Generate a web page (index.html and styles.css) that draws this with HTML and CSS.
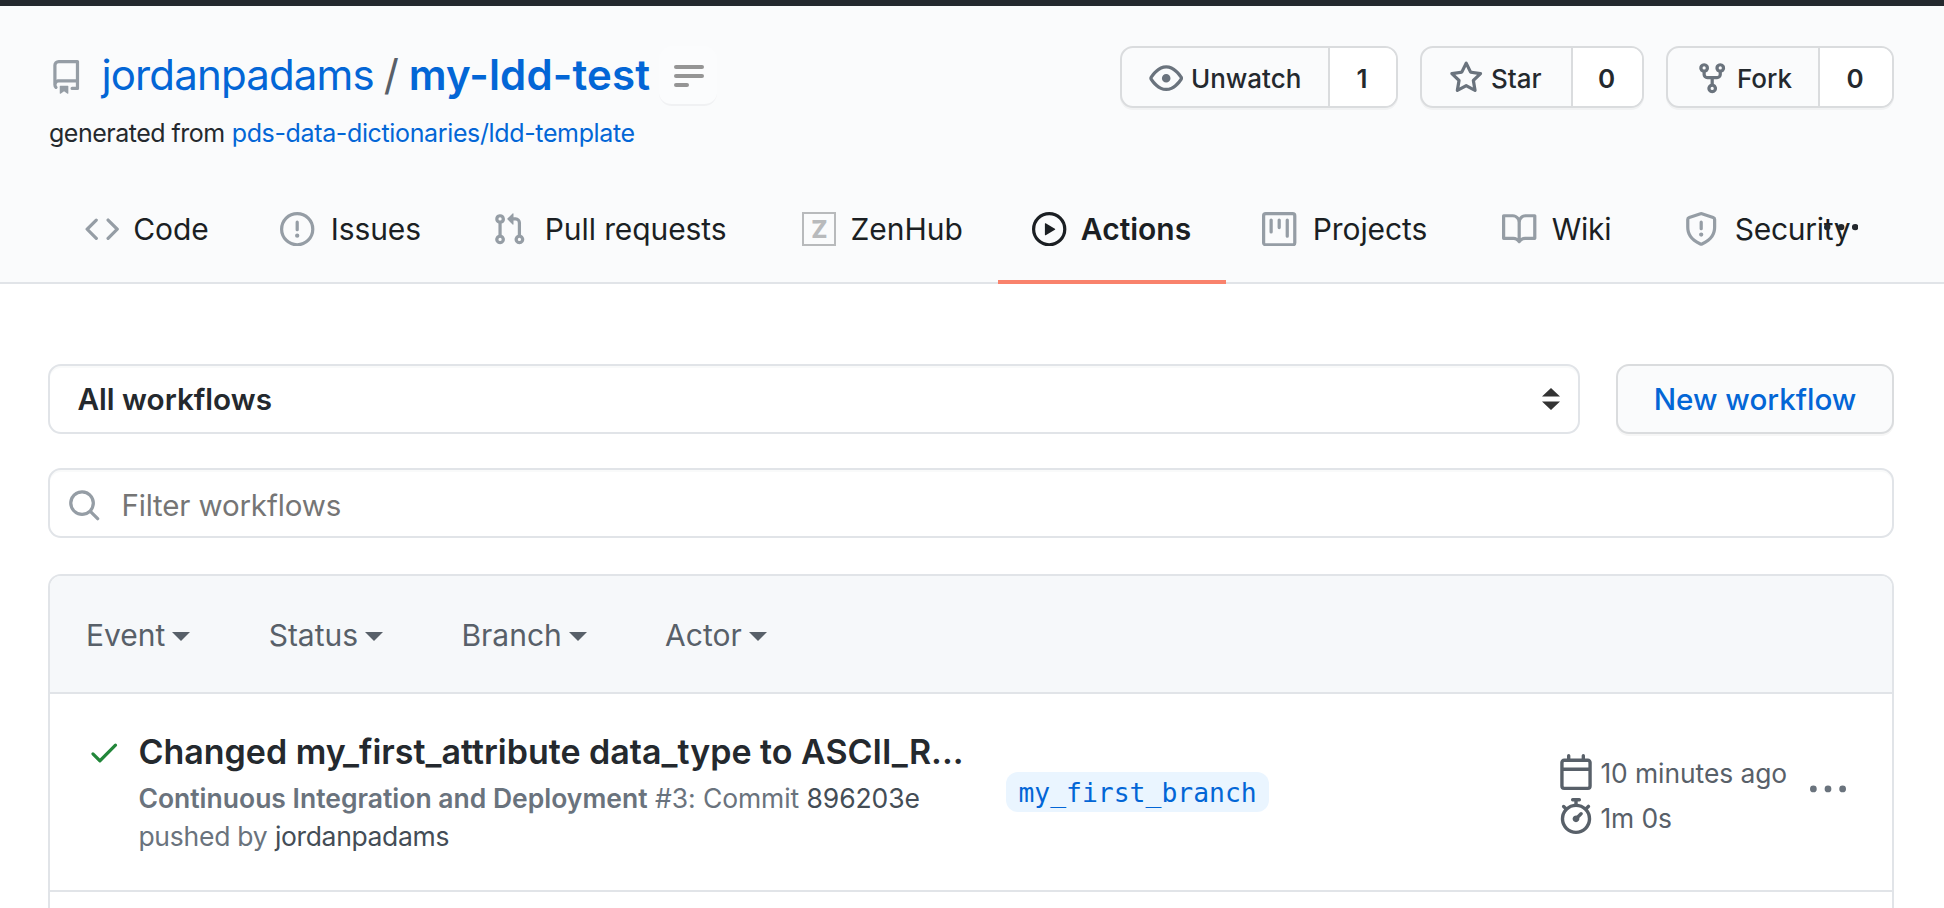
FILE: index.html
```html
<!DOCTYPE html>
<html lang="en">
<head>
<meta charset="utf-8">
<title>Actions · jordanpadams/my-ldd-test</title>
<link rel="stylesheet" href="styles.css">
</head>
<body>
<div class="topbar"></div>
<header class="repo-header">
  <div class="repo-row">
    <svg class="icon icon-repo" viewBox="0 0 16 16"><path fill-rule="evenodd" d="M2 2.5A2.5 2.5 0 014.5 0h8.75a.75.75 0 01.75.75v12.5a.75.75 0 01-.75.75h-2.5a.75.75 0 110-1.5h1.75v-2h-8a1 1 0 00-.714 1.7.75.75 0 01-1.072 1.05A2.495 2.495 0 012 11.5v-9zm10.5-1V9h-8c-.356 0-.694.074-1 .208V2.5a1 1 0 011-1h8zM5 12.25v3.25a.25.25 0 00.4.2l1.45-1.087a.25.25 0 01.3 0L8.6 15.7a.25.25 0 00.4-.2v-3.25a.25.25 0 00-.25-.25h-3.5a.25.25 0 00-.25.25z"/></svg>
    <h1 class="repo-title"><a class="owner">jordanpadams</a><span class="slash">/</span><a class="name">my-ldd-test</a></h1>
    <button class="outline-btn"><span></span><span></span><span class="short"></span></button>
    <div class="social">
      <div class="social-btn watch"><div class="act"><svg class="icon" viewBox="0 0 16 16"><path fill-rule="evenodd" d="M1.679 7.932c.412-.621 1.242-1.75 2.366-2.717C5.175 4.242 6.527 3.5 8 3.5c1.473 0 2.824.742 3.955 1.715 1.124.967 1.954 2.096 2.366 2.717a.119.119 0 010 .136c-.412.621-1.242 1.75-2.366 2.717C10.825 11.758 9.473 12.5 8 12.5c-1.473 0-2.824-.742-3.955-1.715C2.92 9.818 2.09 8.69 1.679 8.068a.119.119 0 010-.136zM8 2c-1.981 0-3.67.992-4.933 2.078C1.797 5.169.88 6.423.43 7.1a1.619 1.619 0 000 1.798c.45.678 1.367 1.932 2.637 3.024C4.329 13.008 6.019 14 8 14c1.981 0 3.67-.992 4.933-2.078 1.27-1.091 2.187-2.345 2.637-3.023a1.619 1.619 0 000-1.798c-.45-.678-1.367-1.932-2.637-3.023C11.671 2.992 9.981 2 8 2zm0 8a2 2 0 100-4 2 2 0 000 4z"/></svg><span>Unwatch</span></div><div class="count">1</div></div>
      <div class="social-btn star"><div class="act"><svg class="icon" viewBox="0 0 16 16"><path fill-rule="evenodd" d="M8 .25a.75.75 0 01.673.418l1.882 3.815 4.21.612a.75.75 0 01.416 1.279l-3.046 2.97.719 4.192a.75.75 0 01-1.088.791L8 12.347l-3.766 1.98a.75.75 0 01-1.088-.79l.72-4.194L.818 6.374a.75.75 0 01.416-1.28l4.21-.611L7.327.668A.75.75 0 018 .25zm0 2.445L6.615 5.5a.75.75 0 01-.564.41l-3.097.45 2.24 2.184a.75.75 0 01.216.664l-.528 3.084 2.769-1.456a.75.75 0 01.698 0l2.77 1.456-.53-3.084a.75.75 0 01.216-.664l2.24-2.183-3.096-.45a.75.75 0 01-.564-.41L8 2.694v.001z"/></svg><span>Star</span></div><div class="count">0</div></div>
      <div class="social-btn fork"><div class="act"><svg class="icon" viewBox="0 0 16 16"><path fill-rule="evenodd" d="M5 3.25a.75.75 0 11-1.5 0 .75.75 0 011.5 0zm0 2.122a2.25 2.25 0 10-1.5 0v.878A2.25 2.25 0 005.75 8.5h1.5v2.128a2.251 2.251 0 101.5 0V8.5h1.5a2.25 2.25 0 002.25-2.25v-.878a2.25 2.25 0 10-1.5 0v.878a.75.75 0 01-.75.75h-4.5A.75.75 0 015 6.25v-.878zm3.75 7.378a.75.75 0 11-1.5 0 .75.75 0 011.5 0zm3-8.75a.75.75 0 100-1.5.75.75 0 000 1.5z"/></svg><span>Fork</span></div><div class="count">0</div></div>
    </div>
  </div>
  <div class="generated"><span>generated from</span> <a>pds-data-dictionaries/ldd-template</a></div>
  <nav class="tabs">
    <a class="tab code"><svg class="icon" viewBox="0 0 16 16"><path fill-rule="evenodd" d="M4.72 3.22a.75.75 0 011.06 1.06L2.06 8l3.72 3.72a.75.75 0 11-1.06 1.06L.47 8.53a.75.75 0 010-1.06l4.25-4.25zm6.56 0a.75.75 0 10-1.06 1.06L13.94 8l-3.72 3.72a.75.75 0 101.06 1.06l4.25-4.25a.75.75 0 000-1.06l-4.25-4.25z"/></svg><span>Code</span></a>
    <a class="tab"><svg class="icon" viewBox="0 0 16 16"><path fill-rule="evenodd" d="M8 1.5a6.5 6.5 0 100 13 6.5 6.5 0 000-13zM0 8a8 8 0 1116 0A8 8 0 010 8zm9 3a1 1 0 11-2 0 1 1 0 012 0zm-.25-6.25a.75.75 0 00-1.5 0v3.5a.75.75 0 001.5 0v-3.5z"/></svg><span>Issues</span></a>
    <a class="tab pulls"><svg class="icon" viewBox="0 0 16 16"><path fill-rule="evenodd" d="M7.177 3.073L9.573.677A.25.25 0 0110 .854v4.792a.25.25 0 01-.427.177L7.177 3.427a.25.25 0 010-.354zM3.75 2.5a.75.75 0 100 1.5.75.75 0 000-1.5zm-2.25.75a2.25 2.25 0 113 2.122v5.256a2.251 2.251 0 11-1.5 0V5.372A2.25 2.25 0 011.5 3.25zM11 2.5h-1V4h1a1 1 0 011 1v5.628a2.251 2.251 0 101.5 0V5A2.5 2.5 0 0011 2.5zm1 10.25a.75.75 0 111.5 0 .75.75 0 01-1.5 0zM3.75 12a.75.75 0 100 1.5.75.75 0 000-1.5z"/></svg><span>Pull requests</span></a>
    <a class="tab zenhub"><span class="zen">Z</span><span>ZenHub</span></a>
    <a class="tab selected"><svg class="icon" viewBox="0 0 16 16"><path fill-rule="evenodd" d="M1.5 8a6.5 6.5 0 1113 0 6.5 6.5 0 01-13 0zM8 0a8 8 0 100 16A8 8 0 008 0zM6.379 5.227A.25.25 0 006 5.442v5.117a.25.25 0 00.379.214l4.264-2.559a.25.25 0 000-.428L6.379 5.227z"/></svg><span>Actions</span></a>
    <a class="tab"><svg class="icon" viewBox="0 0 16 16"><path fill-rule="evenodd" d="M1.75 0A1.75 1.75 0 000 1.75v12.5C0 15.216.784 16 1.75 16h12.5A1.75 1.75 0 0016 14.25V1.75A1.75 1.75 0 0014.25 0H1.75zM1.5 1.75a.25.25 0 01.25-.25h12.5a.25.25 0 01.25.25v12.5a.25.25 0 01-.25.25H1.75a.25.25 0 01-.25-.25V1.75zM11.75 3a.75.75 0 00-.75.75v7.5a.75.75 0 001.5 0v-7.5a.75.75 0 00-.75-.75zm-8.25.75a.75.75 0 011.5 0v5.5a.75.75 0 01-1.5 0v-5.5zM8 3a.75.75 0 00-.75.75v3.5a.75.75 0 001.5 0v-3.5A.75.75 0 008 3z"/></svg><span>Projects</span></a>
    <a class="tab"><svg class="icon" viewBox="0 0 16 16"><path fill-rule="evenodd" d="M0 1.75A.75.75 0 01.75 1h4.253c1.227 0 2.317.59 3 1.501A3.744 3.744 0 0111.006 1h4.245a.75.75 0 01.75.75v10.5a.75.75 0 01-.75.75h-4.507a2.25 2.25 0 00-1.591.659l-.622.621a.75.75 0 01-1.06 0l-.622-.621A2.25 2.25 0 005.258 13H.75a.75.75 0 01-.75-.75V1.75zm8.755 3a2.25 2.25 0 012.25-2.25H14.5v9h-3.757c-.71 0-1.4.201-1.992.572l.004-7.322zm-1.504 7.324l.004-5.073-.002-2.253A2.25 2.25 0 005.003 2.5H1.5v9h3.757a3.75 3.75 0 011.994.574z"/></svg><span class="wiki">Wiki</span></a>
    <a class="tab"><svg class="icon" viewBox="0 0 16 16"><path fill-rule="evenodd" d="M7.467.133a1.75 1.75 0 011.066 0l5.25 1.68A1.75 1.75 0 0115 3.48V7c0 1.566-.32 3.182-1.303 4.682-.983 1.498-2.585 2.813-5.032 3.855a1.7 1.7 0 01-1.33 0c-2.447-1.042-4.049-2.357-5.032-3.855C1.32 10.182 1 8.566 1 7V3.48a1.75 1.75 0 011.217-1.667l5.25-1.68zm.61 1.429a.25.25 0 00-.153 0l-5.25 1.68a.25.25 0 00-.174.238V7c0 1.358.275 2.666 1.057 3.86.784 1.194 2.121 2.34 4.366 3.297a.2.2 0 00.154 0c2.245-.956 3.582-2.104 4.366-3.298C13.225 9.666 13.5 8.36 13.5 7V3.48a.25.25 0 00-.174-.237l-5.25-1.68zM9 10.5a1 1 0 11-2 0 1 1 0 012 0zm-.25-5.75a.75.75 0 10-1.5 0v3a.75.75 0 001.5 0v-3z"/></svg><span class="sec">Security</span></a>
    <svg class="icon more" viewBox="0 0 16 16"><path d="M8 9a1.5 1.5 0 100-3 1.5 1.5 0 000 3zM1.5 9a1.5 1.5 0 100-3 1.5 1.5 0 000 3zm13 0a1.5 1.5 0 100-3 1.5 1.5 0 000 3z"/></svg>
  </nav>
</header>
<main class="content">
  <div class="controls">
    <div class="select"><span>All workflows</span><svg class="arrows" viewBox="0 0 18 22"><path d="M9 0l9 8.5H0zM9 22l9-8.5H0z"/></svg></div>
    <button class="new-btn">New workflow</button>
  </div>
  <div class="filter"><svg class="icon" viewBox="0 0 16 16"><path fill-rule="evenodd" d="M11.5 7a4.499 4.499 0 11-8.998 0A4.499 4.499 0 0111.5 7zm-.82 4.74a6 6 0 111.06-1.06l3.04 3.04a.75.75 0 11-1.06 1.06l-3.04-3.04z"/></svg><span>Filter workflows</span></div>
  <section class="box">
    <div class="box-header">
      <span class="menu">Event</span>
      <span class="menu">Status</span>
      <span class="menu">Branch</span>
      <span class="menu">Actor</span>
    </div>
    <div class="run">
      <svg class="icon check" viewBox="0 0 16 16"><path fill-rule="evenodd" d="M13.78 4.22a.75.75 0 010 1.06l-7.25 7.25a.75.75 0 01-1.06 0L2.22 9.28a.75.75 0 011.06-1.06L6 10.94l6.72-6.72a.75.75 0 011.06 0z"/></svg>
      <div class="run-main">
        <div class="run-title">Changed my_first_attribute data_type to ASCII_R...</div>
        <div class="run-sub"><b>Continuous Integration and Deployment</b> <span>#3: Commit</span> <span class="dark">896203e</span></div>
        <div class="run-sub"><span class="by">pushed by</span> <span class="dark user">jordanpadams</span></div>
      </div>
      <div class="branch-col"><span class="branch">my_first_branch</span></div>
      <div class="meta">
        <div class="meta-line"><svg class="icon" viewBox="0 0 16 16"><path fill-rule="evenodd" d="M4.75 0a.75.75 0 01.75.75V2h5V.75a.75.75 0 011.5 0V2h1.25c.966 0 1.75.784 1.75 1.75v10.5A1.75 1.75 0 0113.25 16H2.75A1.75 1.75 0 011 14.25V3.75C1 2.784 1.784 2 2.75 2H4V.75A.75.75 0 014.75 0zm0 3.5h8.5a.25.25 0 01.25.25V6h-11V3.75a.25.25 0 01.25-.25h2zm-2.25 4v6.75c0 .138.112.25.25.25h10.5a.25.25 0 00.25-.25V7.5h-11z"/></svg><span>10 minutes ago</span></div>
        <div class="meta-line duration"><svg class="icon" viewBox="0 0 16 16"><path fill-rule="evenodd" d="M5.75.75A.75.75 0 016.5 0h3a.75.75 0 010 1.5h-.75v1l-.001.041a6.718 6.718 0 013.464 1.435l.007-.006.75-.75a.75.75 0 111.06 1.06l-.75.75-.006.007a6.75 6.75 0 11-10.548 0L2.72 5.03l-.75-.75a.75.75 0 011.06-1.06l.75.75.007.006A6.718 6.718 0 017.25 2.541a.756.756 0 010-.041v-1H6.5a.75.75 0 01-.75-.75zM8 14.5A5.25 5.25 0 108 4a5.25 5.25 0 000 10.5zm.389-6.7l1.33-1.33a.75.75 0 111.061 1.06L9.45 8.861A1.502 1.502 0 018 10.75a1.5 1.5 0 11.389-2.95z"/></svg><span>1m 0s</span></div>
      </div>
      <svg class="icon kebab" viewBox="0 0 16 16"><path d="M8 9a1.5 1.5 0 100-3 1.5 1.5 0 000 3zM1.5 9a1.5 1.5 0 100-3 1.5 1.5 0 000 3zm13 0a1.5 1.5 0 100-3 1.5 1.5 0 000 3z"/></svg>
    </div>
  </section>
</main>
</body>
</html>
```

FILE: styles.css
```css
* { box-sizing: border-box; }
body { margin: 0; height: 908px; overflow: hidden; background: #fff; color: #24292e; font-family: Inter, "Liberation Sans", sans-serif; }
.icon { width: 34.4px; height: 34.4px; fill: currentColor; flex: none; display: block; }
.topbar { height: 6px; background: #24292e; }
.repo-header { height: 278px; padding: 40px 50px 0 48px; background: #fafbfc; border-bottom: 2px solid #e1e4e8; }
.repo-row { display: flex; height: 62px; align-items: flex-start; }
.icon-repo { margin: 14px 0 0 1px; color: #959da5; }
.repo-title { margin: 0 0 0 18px; display: flex; font-size: 42px; font-weight: 400; line-height: 57px; color: #0366d6; }
.owner { letter-spacing: -0.85px; }
.slash { color: #586069; width: 35px; text-align: center; }
.name { font-weight: 600; letter-spacing: 0.15px; }
.outline-btn { margin: 0 0 0 9px; width: 58px; height: 60px; padding: 19px 0 0 15px; border: 0; border-bottom: 2px solid #f0f1f3; border-radius: 13px; background: #fbfcfd; display: flex; flex-direction: column; gap: 5px; }
.outline-btn span { width: 30px; height: 4px; border-radius: 2px; background: #959595; }
.outline-btn .short { width: 15px; }
.social { margin-left: auto; display: flex; gap: 22px; font-size: 26px; font-weight: 500; }
.social-btn { display: flex; height: 62px; border: 2px solid #dadcde; border-radius: 13px; background: #fafbfc; box-shadow: 0 2px 0 rgba(27,31,35,.04); overflow: hidden; }
.act { display: flex; align-items: center; gap: 7.5px; padding: 2px 0 0 27px; border-right: 2px solid #dadcde; }
.act .icon { color: #6a737d; }
.count { flex: 1; display: flex; align-items: center; justify-content: center; padding: 2px 2px 0 0; background: #fff; font-weight: 600; }
.watch { width: 278px; } .watch .act { width: 208px; }
.star { width: 224px; } .star .act { width: 151px; }
.fork { width: 228px; } .fork .act { width: 152px; }
.generated { height: 36px; margin: 7px 0 0 1px; font-size: 25px; line-height: 37px; letter-spacing: -0.5px; display: flex; gap: 7px; }
.generated a { color: #0366d6; letter-spacing: -0.36px; }
.tabs { position: relative; margin: 23px -50px 0 3px; height: 110px; display: grid; grid-template-columns: 195px 212px 310px 230px 230px 240px 182px 230px; font-size: 30px; }
.tab { display: flex; align-items: center; gap: 16px; padding-left: 34.4px; white-space: nowrap; color: #1b1f23; letter-spacing: -0.1px; }
.tab .icon { color: #959da5; }
.code { gap: 13.5px; }
.pulls { gap: 18px; }
.zenhub { gap: 14px; letter-spacing: 0; }
.selected { gap: 14px; width: 228px; font-weight: 600; letter-spacing: 0; box-shadow: inset 0 -4px #f9826c; }
.tab.selected .icon { color: #1b1f23; }
.sec { letter-spacing: -0.3px; }
.wiki { margin-left: -1px; letter-spacing: -0.3px; }
.zen { width: 34px; height: 34px; border: 2px solid #b8babc; display: flex; align-items: center; justify-content: center; font-size: 24px; font-weight: 800; color: #b8babc; }
.more { position: absolute; left: 1772.5px; top: 37px; }
.content { padding: 80px 50px 0 48px; }
.controls { display: flex; gap: 36px; height: 70px; font-size: 29.7px; }
.select { flex: 1; display: flex; align-items: center; justify-content: space-between; padding: 0 18px 0 27.5px; border: 2px solid #e1e4e8; border-radius: 13px; font-weight: 600; box-shadow: inset 0 2px 0 rgba(225,228,232,.2); }
.arrows { width: 18px; height: 22px; fill: #333; }
.new-btn { width: 278px; padding: 0; border: 2px solid #dadcde; border-radius: 13px; background: #fafbfc; box-shadow: 0 2px 0 rgba(27,31,35,.04); font: 500 29.6px Inter, sans-serif; color: #0366d6; }
.filter { margin-top: 34px; height: 70px; display: flex; align-items: center; gap: 20px; padding: 3px 0 0 17px; border: 2px solid #e1e4e8; border-radius: 13px; font-size: 29.5px; letter-spacing: -0.15px; color: #757575; box-shadow: inset 0 2px 0 rgba(225,228,232,.2); }
.filter .icon { color: #959da5; margin-top: 1px; }
.box { margin-top: 36px; height: 334px; border: 2px solid #e1e4e8; border-bottom: 0; border-radius: 13px 13px 0 0; overflow: hidden; }
.box-header { height: 118px; display: flex; align-items: center; gap: 78.3px; padding: 2px 0 0 36px; background: #f6f8fa; border-bottom: 2px solid #e1e4e8; font-size: 30px; color: #586069; }
.menu { display: flex; align-items: center; gap: 7px; }
.menu::after { content: ""; border: 9px solid transparent; border-top-color: currentColor; border-bottom: 0; margin-top: 3px; }
.run { display: flex; height: 198px; padding: 34px 0 0 37px; border-bottom: 2px solid #e1e4e8; }
.check { margin-top: 7px; color: #22863a; }
.run-main { flex: none; width: 885px; padding-left: 17px; white-space: nowrap; }
.run-title { font-size: 34px; font-weight: 600; line-height: 48px; margin-bottom: 4px; }
.run-sub { display: flex; gap: 7.5px; font-size: 26.5px; line-height: 37.5px; letter-spacing: -0.1px; color: #6a737d; }
.run-sub b { font-weight: 600; letter-spacing: 0; }
.run-sub .dark { color: #444d56; }
.run-sub .by { letter-spacing: -0.25px; }
.run-sub .user { letter-spacing: -0.35px; }
.branch-col { flex: none; width: 552px; padding-top: 44px; }
.branch { display: inline-block; height: 40px; padding: 0 12px; border-radius: 12px; background: #eaf5ff; color: #0366d6; font: 26.4px/41px "DejaVu Sans Mono", monospace; }
.meta { flex: none; padding-top: 26px; font-size: 26.4px; color: #586069; width: 252px; display: flex; flex-direction: column; gap: 8px; }
.meta-line { display: flex; gap: 6px; height: 36px; line-height: 39px; white-space: nowrap; letter-spacing: -0.05px; }
.duration { line-height: 41px; }
.meta .icon { width: 36px; height: 36px; }
.kebab { width: 36px; height: 36px; margin-top: 44px; color: #6a737d; }
```
